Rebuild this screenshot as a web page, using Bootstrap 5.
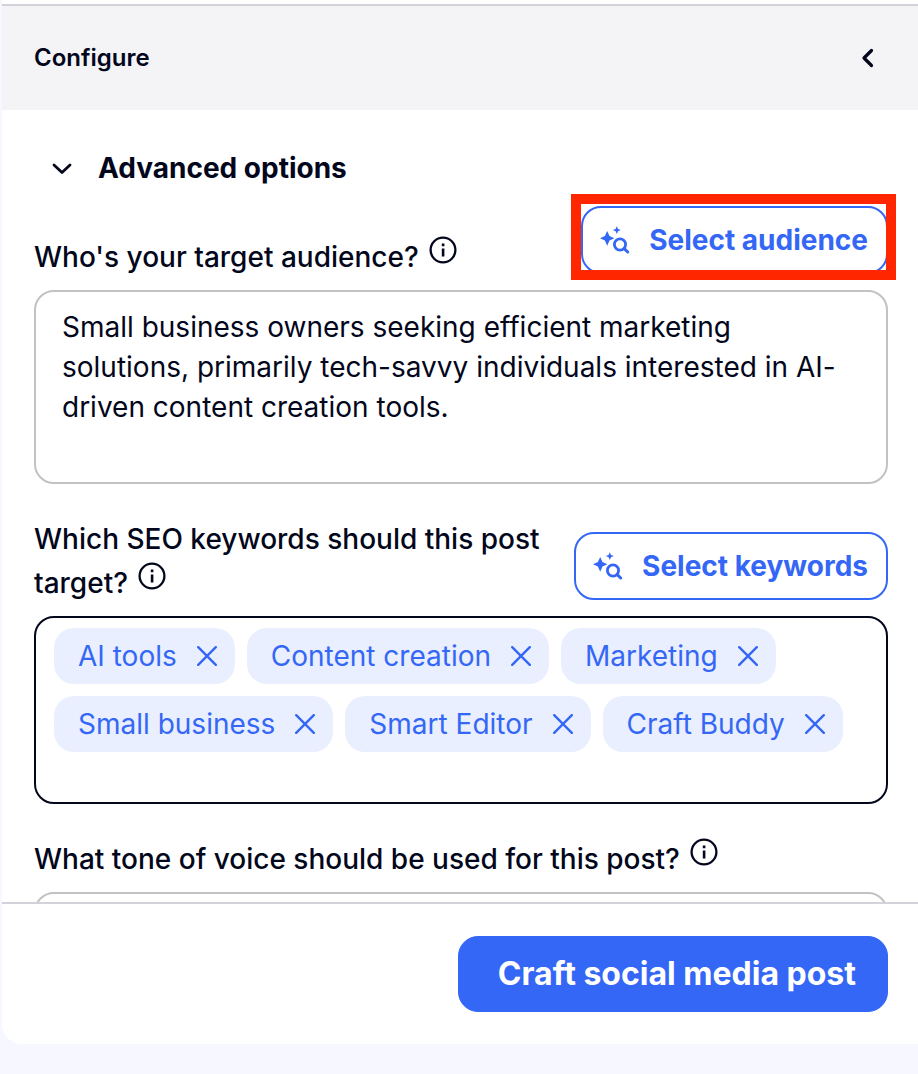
<!DOCTYPE html>
<html lang="en">
<head>
<meta charset="utf-8">
<meta name="viewport" content="width=device-width, initial-scale=1">
<title>Configure</title>
<link href="https://cdn.jsdelivr.net/npm/bootstrap@5.3.0/dist/css/bootstrap.min.css" rel="stylesheet">
<style>
  :root { --ink: #03071c; --brand: #3567f6; --tint: #e9efff; --line: #d2d2da; }
  body { font-family: Inter, "Liberation Sans", sans-serif; font-size: 28px; line-height: 40px; color: var(--ink); background: #f7f8ff; }
  .panel { margin: 0 0 30px 2px; padding-top: 4px; border-bottom-left-radius: 20px; min-height: 0; }
  .panel-head { background: #f4f4f7; border-top: 2px solid var(--line); padding: 32px; }
  .panel-head h1 { font-size: 24px; line-height: 40px; font-weight: 600; }
  .panel-body { padding: 38px 30px 0 32px; min-height: 0; }
  .panel-foot { border-top: 2px solid var(--line); padding: 32px 30px; }
  .plain-btn { background: none; border: 0; padding: 0; color: inherit; display: flex; align-items: center; }
  .section-toggle { font-weight: 700; gap: 24px; padding-left: 16px; margin-bottom: 18px; }
  .field-head { gap: 16px; margin-bottom: 11px; }
  .field-head label { font-weight: 500; line-height: 44px; }
  .field-box + .field-head { margin-top: 33px; }
  .info { width: 28px; height: 28px; margin-left: 3px; vertical-align: 3px; }
  .ai-btn { --bs-btn-color: var(--brand); --bs-btn-border-color: var(--brand); --bs-btn-hover-bg: var(--tint); --bs-btn-hover-color: var(--brand);
    --bs-btn-bg: #fff; font-size: 28px; line-height: 40px; font-weight: 700; border-width: 2px; border-radius: 20px; padding: 12px 18px 12px 17px; white-space: nowrap; gap: 19px; }
  .field-action { margin-bottom: 5px; }
  .highlight { position: absolute; top: -12px; left: -10px; right: -8px; bottom: -6px; border: 10px solid #ff2600; pointer-events: none; }
  .field-box { border: 2px solid #c2c2c4; border-radius: 20px; font-size: 28px; line-height: 40px; color: var(--ink); }
  textarea.field-box { height: 194px; padding: 15px 26px; resize: none; }
  .tag-box { border-color: var(--ink); padding: 10px 18px 12px; gap: 12px; }
  .tag { background: var(--tint); color: var(--brand); border-radius: 20px; padding: 8px 18px 8px 24px; gap: 20px; }
  .tag-input { border: 0; outline: 0; padding: 0; height: 26px; background: none; }
  .craft-btn { --bs-btn-bg: var(--brand); --bs-btn-border-color: var(--brand); font-size: 32px; line-height: 44px; font-weight: 700; border-radius: 20px; padding: 15px 31px 15px 39px; }
</style>
</head>
<body class="vh-100 d-flex flex-column overflow-hidden">
<svg class="d-none" xmlns="http://www.w3.org/2000/svg">
  <symbol id="i-info" viewBox="0 0 28 28"><circle cx="14" cy="14" r="12.4" fill="none" stroke="currentColor" stroke-width="2.3"/><path d="M12.8 7.6h2.6v2.7h-2.6zM12.8 12.4h2.6v8h-2.6z" fill="currentColor"/></symbol>
  <symbol id="i-ai" viewBox="0 0 30 28"><path d="M7.200 5L9.500 10L14.400 12.300L9.500 14.600L7.200 19.700L4.900 14.600L0 12.300L4.900 10ZM16.800 0.200L18 2.900L20.800 4.100L18 5.300L16.800 8L15.600 5.300L12.800 4.100L15.600 2.900Z" fill="currentColor"/><circle cx="20" cy="18.500" r="5.600" fill="none" stroke="currentColor" stroke-width="2.800"/><path d="M24.200 22.600L27.700 26" fill="none" stroke="currentColor" stroke-width="3" stroke-linecap="round"/></symbol>
  <symbol id="i-x" viewBox="0 0 20 20"><path d="M1.200 1.200L18.800 18.800M18.800 1.200L1.200 18.800" fill="none" stroke="currentColor" stroke-width="2.400" stroke-linecap="round"/></symbol>
</svg>
<main class="panel bg-white d-flex flex-column flex-grow-1 overflow-hidden">
  <header class="panel-head d-flex justify-content-between align-items-center">
    <h1 class="m-0">Configure</h1>
    <button class="plain-btn" type="button" aria-label="Collapse panel">
      <svg width="32" height="32" viewBox="0 0 32 32"><path d="M17.500 8.500L10 16L17.500 23.500" fill="none" stroke="currentColor" stroke-width="3.200" stroke-linecap="round" stroke-linejoin="round"/></svg>
    </button>
  </header>
  <section class="panel-body flex-grow-1 overflow-hidden">
    <button class="plain-btn section-toggle" type="button" aria-expanded="true">
      <svg width="24" height="26" viewBox="1 0 24 26"><path d="M5 10L13 17.500L21 10" fill="none" stroke="currentColor" stroke-width="2.800" stroke-linecap="round" stroke-linejoin="round"/></svg>
      Advanced options
    </button>

    <div class="field-head d-flex justify-content-between align-items-end">
      <label for="audience">Who's your target audience? <svg class="info"><use href="#i-info"/></svg></label>
      <div class="field-action position-relative flex-shrink-0">
        <button class="btn ai-btn d-flex align-items-center" type="button"><svg width="30" height="28"><use href="#i-ai"/></svg>Select audience</button>
        <div class="highlight"></div>
      </div>
    </div>
    <textarea id="audience" class="field-box w-100 d-block">Small business owners seeking efficient marketing solutions, primarily tech-savvy individuals interested in AI-driven content creation tools.</textarea>

    <div class="field-head d-flex justify-content-between align-items-end">
      <label for="keywords">Which SEO keywords should this post target? <svg class="info"><use href="#i-info"/></svg></label>
      <div class="field-action flex-shrink-0">
        <button class="btn ai-btn d-flex align-items-center" type="button"><svg width="30" height="28"><use href="#i-ai"/></svg>Select keywords</button>
      </div>
    </div>
    <div class="field-box tag-box d-flex flex-wrap">
      <span class="tag d-flex align-items-center">AI tools<button class="plain-btn" type="button" aria-label="Remove AI tools"><svg width="20" height="20"><use href="#i-x"/></svg></button></span>
      <span class="tag d-flex align-items-center">Content creation<button class="plain-btn" type="button" aria-label="Remove Content creation"><svg width="20" height="20"><use href="#i-x"/></svg></button></span>
      <span class="tag d-flex align-items-center">Marketing<button class="plain-btn" type="button" aria-label="Remove Marketing"><svg width="20" height="20"><use href="#i-x"/></svg></button></span>
      <span class="tag d-flex align-items-center">Small business<button class="plain-btn" type="button" aria-label="Remove Small business"><svg width="20" height="20"><use href="#i-x"/></svg></button></span>
      <span class="tag d-flex align-items-center">Smart Editor<button class="plain-btn" type="button" aria-label="Remove Smart Editor"><svg width="20" height="20"><use href="#i-x"/></svg></button></span>
      <span class="tag d-flex align-items-center">Craft Buddy<button class="plain-btn" type="button" aria-label="Remove Craft Buddy"><svg width="20" height="20"><use href="#i-x"/></svg></button></span>
      <input id="keywords" class="tag-input w-100" type="text">
    </div>

    <div class="field-head d-flex">
      <label for="tone">What tone of voice should be used for this post? <svg class="info"><use href="#i-info"/></svg></label>
    </div>
    <textarea id="tone" class="field-box w-100 d-block"></textarea>
  </section>
  <footer class="panel-foot d-flex justify-content-end">
    <button class="btn btn-primary craft-btn" type="button">Craft social media post</button>
  </footer>
</main>
<script src="https://cdn.jsdelivr.net/npm/bootstrap@5.3.0/dist/js/bootstrap.bundle.min.js"></script>
</body>
</html>
